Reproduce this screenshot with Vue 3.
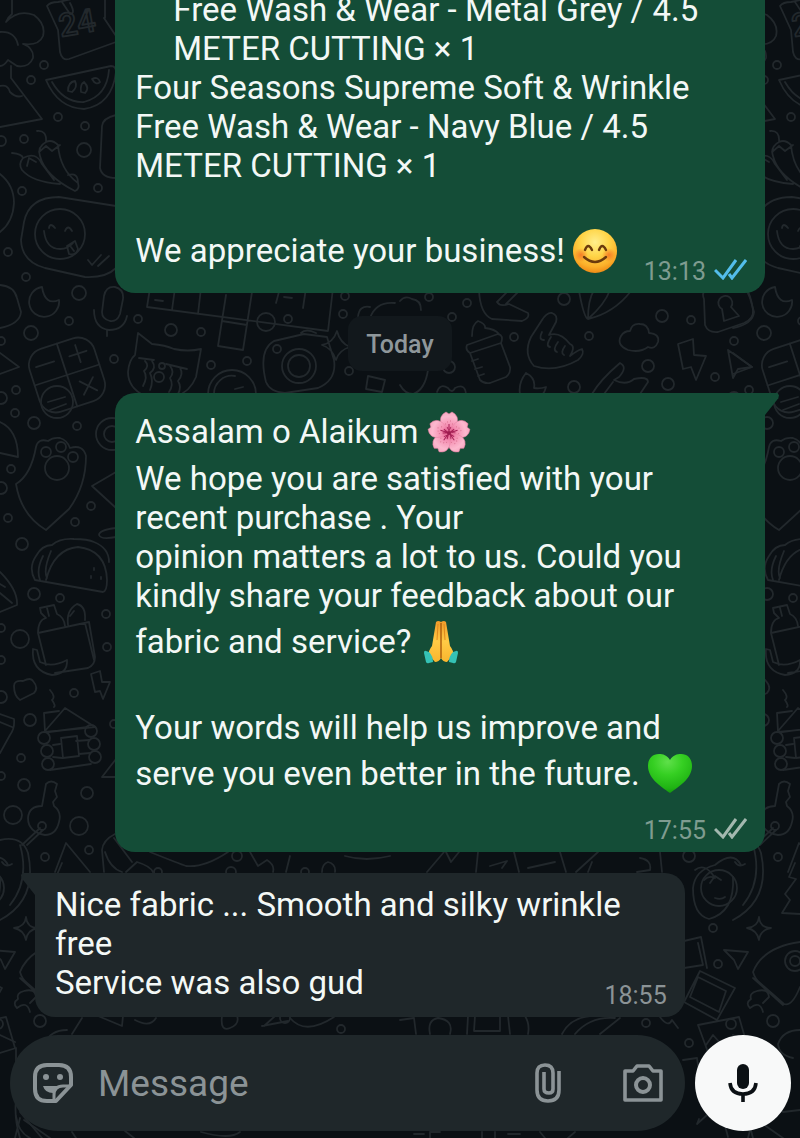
<template>
  <div class="chat">
    <!-- doodle wallpaper -->
    <svg class="wallpaper" width="1466" height="1138" viewBox="0 0 1466 1138" aria-hidden="true">
      <defs>
        <g id="doodle-edge">
          <circle v-for="(d, i) in edgeDots" :key="i" :cx="d[0]" :cy="d[1]" :r="d[2]" />
          <!-- tree, calendar -->
          <path d="M12 0V14Q8 17 6 22Q18 9 34 15Q46 24 43 36Q39 46 23 44Q34 48 33 58Q29 68 17 66L8 60Q4 66 0 66M0 32Q15 31 18 45M11 66V78L42 119L0 127M0 86Q8 84 10 92Q16 98 22 96" />
          <path d="M47 6Q50 2 58 2L104 -8M47 6L58 30L60 52Q62 61 69 59L116 42M104 18L116 36M62 2L70 14Q76 14 70 3M105 0V18" />
          <text x="61" y="37" transform="rotate(-10 61 37)">24</text>
          <!-- watermelon -->
          <path d="M46 80L111 66Q116 66 116 72Q112 105 84 109Q58 108 46 80ZM52 82Q64 103 84 102Q107 96 109 70M68 91Q68 82 75 81Q78 87 72 92ZM81 92Q80 84 84 82Q90 88 85 93ZM92 79Q98 76 100 82Q96 86 92 79Z" />
          <!-- chili peppers -->
          <path d="M37 131Q47 130 46 142Q37 147 40 156Q45 176 75 191Q80 189 78 183Q60 170 58 145Q52 139 46 142M39 152L46 146L52 151L60 145M12 153Q22 154 23 158Q18 164 22 170Q32 182 60 184M23 158Q36 151 42 164L54 180M27 166L29 158L36 162M68 175Q78 172 78 183M116 115Q103 118 102 126L100 168Q102 178 116 178" />
          <!-- mug with a smile -->
          <path d="M116 206L59 197Q29 197 24 222L21 240Q22 262 45 268L85 277Q106 278 116 268M44 231Q46 249 60 249Q68 249 73 243M49 228Q50 222 55 228M65 231Q68 224 72 231M67 246L75 241L78 249Q76 256 69 254ZM71 247L74 251M88 260L92 265L101 255M98 266L109 256M0 174Q14 185 14 203Q13 222 0 232" />
          <circle cx="60" cy="234" r="25" />
          <!-- moon, microphone -->
          <path d="M0 285Q14 286 17 298L21 312Q20 324 0 328M42 287A15 15 0 1 0 59 300Q45 306 42 287ZM104 296Q106 286 115 287Q124 289 123 299L120 314Q117 322 110 321Q102 319 102 312ZM94 310Q94 328 109 330Q124 330 127 316M107 330V336" />
          <!-- calculator -->
          <g transform="translate(67 375) rotate(-18)">
            <rect x="-34" y="-33" width="68" height="66" rx="17" />
            <path d="M0 -33V33M-34 0H34M-27 -17H-8M8 -17H26M17 -26V-8M10 10L24 24M24 10L10 24" />
          </g>
          <circle cx="57" cy="402" r="16" />
          <path d="M48 402L65 397M50 410L66 404M0 353L19 367L0 374M0 422Q18 430 18 457L0 453" />
          <!-- paw heart -->
          <path d="M36 447Q38 438 48 441Q53 437 60 438Q67 440 70 448Q83 444 86 456Q86 486 69 509L46 530Q21 515 16 484Q31 475 36 447ZM116 472L92 486L116 508M116 528Q99 530 99 535Q101 540 116 537" />
          <circle cx="46" cy="452" r="5" /><circle cx="61" cy="447" r="5" /><circle cx="73" cy="457" r="5" />
          <circle cx="57" cy="468" r="12" /><circle cx="112" cy="434" r="16" /><circle cx="112" cy="434" r="8" />
          <!-- taco -->
          <path d="M46 580Q54 549 78 547Q106 550 107 580Q107 591 103 592L35 580Q28 568 36 556Q42 545 52 545Q60 538 74 539Q88 539 94 542Q109 548 109 562M43 556Q36 570 40 580M51 551Q43 570 47 578M94 568V570M91 576V578M101 577V579M0 572Q18 590 17 605L0 612M0 593L12 603M5 587L0 584" />
          <!-- groceries -->
          <path d="M38 633L89 622L95 657Q95 665 88 668L55 673M38 633L46 665M38 633Q38 620 46 618L41 613L40 608L54 605L57 614Q64 617 65 626M47 608L49 616M68 625Q66 610 77 604Q86 606 85 620M85 623L94 660M70 616L74 611M33 649Q31 671 52 675Q68 674 67 660Q52 668 40 662L37 650ZM91 674L100 671L102 682L110 682L103 699L100 691L95 692ZM14 686Q14 680 23 681Q31 677 33 681Q39 688 34 693L20 700Q14 696 14 686Z" />
          <!-- log cabin -->
          <path d="M50 690Q56 697 52 700Q56 706 54 707M45 731L65 708L95 727L45 732L44 713L59 711M49 732L88 727M53 745L60 744M76 741L89 740M53 757L62 758M79 754L90 753M50 770L91 764M61 738L77 736L79 756L63 758ZM116 759L102 777H116M0 714L14 719Q15 728 10 735L0 753M0 722L12 727" />
          <circle cx="44" cy="738" r="6" /><circle cx="47" cy="751" r="6" /><circle cx="48" cy="764" r="6" />
          <circle cx="91" cy="731" r="6" /><circle cx="94" cy="744" r="6" /><circle cx="95" cy="757" r="6" />
          <!-- key, sloth -->
          <path d="M42 806L46 784Q51 779 57 784L55 791L57 797L53 802L54 806Q62 812 59 822Q56 835 45 835Q28 832 28 818Q29 806 42 806ZM40 828L22 845M43 830L27 845M55 872L66 843L90 872M0 840Q22 835 28 853Q38 900 0 920M20 845Q30 880 10 905M2 862Q6 868 12 864" />
          <circle cx="42" cy="826" r="4" />
          <path d="M-38 870Q-28 862 -18 878Q-24 875 -29 880M0 877Q2 912 -24 919Q-40 915 -40 888Q-38 870 -18 865Q0 850 8 865" />
          <circle cx="-14" cy="888" r="18" />
          <path d="M-23 883L-18 876L-12 880M-18 898Q-12 900 -8 897M62 863L56 877L63 879L52 894L57 900L49 913L67 914" />
          <!-- stars, rocket -->
          <path d="M26 917Q27 928 38 928Q27 930 26 940Q24 930 14 928Q25 927 26 917ZM-9 950L15 952L5 969L1 960Z" />
          <path d="M67 942Q30 947 20 972Q22 979 27 983L51 1004Q59 1007 67 987M20 978L50 1005M24 991Q16 993 18 999Q12 1003 17 1008Q27 1000 30 1012M24 991Q35 988 36 997L30 1003" />
          <circle cx="62" cy="961" r="10" /><circle cx="62" cy="961" r="5" />
          <!-- photos -->
          <path d="M-49 941L-32 937L-26 968M-49 968L-30 965L-35 943M-33 971L2 988L-16 1020L-49 1002ZM-35 977L-7 991L-14 1012L-43 997ZM-35 1025L6 1017L15 1048M-35 1025L-24 1055M-27 1045L-20 1035L-12 1044M67 1030Q50 1030 45 1044Q46 1055 60 1058" />
          <path d="M-50 1060L-36 1058L-33 1080M-34 1119L-36 1124L-16 1106L-2 1112Q-10 1113 -10 1118L-5 1137M30 1115Q40 1105 50 1112L67 1110M15 1138L20 1118M0 1035L15 1042M0 1053L16 1048V1072M16 1100Q14 1118 20 1138M24 1120L50 1138" />
        </g>
      </defs>
      <g class="doodle">
        <use href="#doodle-edge" />
        <use href="#doodle-edge" x="733" />
        <circle v-for="(d, i) in middleDots" :key="i" :cx="d[0]" :cy="d[1]" :r="d[2]" />
        <!-- crossword -->
        <path d="M150 288L147 307L328 331L333 288M175 288L172 310M201 288L198 314M226 295L218 346L243 350L252 292M222 321L247 325M280 288L276 303M306 288L303 308M155 300L163 301M284 297L292 298" />
        <!-- cat -->
        <path d="M138 333L152 344Q165 345 174 349Q188 352 201 349L196 377Q190 392 176 396H145Q128 388 128 372Q129 360 135 355ZM139 358L154 360M166 364L187 369M145 361Q150 366 144 371Q148 377 143 386M152 361Q157 368 150 373Q154 381 150 390M170 366Q175 372 170 378Q174 385 169 392M180 368Q184 374 178 381Q182 387 178 394" />
        <circle cx="162" cy="366" r="3" /><circle cx="159" cy="377" r="5" />
        <!-- camera, globe -->
        <path d="M301 333Q306 328 316 333M274 341L304 334L327 337L334 360Q337 380 318 388L285 393Q270 392 266 382Q258 350 274 341ZM337 331Q340 343 350 347Q339 350 336 360Q332 348 322 345Q333 343 337 331ZM208 394A24 24 0 0 1 256 394M214 394A18 18 0 0 1 235 376M235 389L243 387" />
        <circle cx="299" cy="366" r="17" /><circle cx="299" cy="366" r="11" />
        <path d="M368 376L385 380L382 392L366 389ZM358 317Q359 305 370 307M370 318Q376 301 395 303M400 301Q405 295 412 299Q421 300 421 310" />
        <!-- bottle, hands -->
        <path d="M467 345L498 334Q504 335 501 343L470 353Q465 350 467 345ZM472 336Q472 324 478 321Q486 324 485 328Q495 329 499 334M470 353L480 380Q484 384 490 383L506 377Q511 373 510 367L501 343M472 361L478 359M475 369L482 367M478 376L484 374" />
        <path d="M479 290Q480 314 492 319L522 321Q530 318 528 313L509 304Q500 307 497 302M497 302L511 288M506 304L520 290M579 291Q584 318 588 319Q614 313 631 291M588 319Q588 300 594 290M588 319Q605 304 610 290" />
        <path d="M552 313Q558 315 556 322L549 335Q560 331 570 344Q576 346 570 356Q578 350 582 349Q585 354 578 360Q555 373 534 366Q523 354 531 337L542 320Q547 312 552 313ZM542 332Q538 340 544 340M551 337Q545 346 550 347M558 342Q552 350 557 352M565 346Q560 353 564 355" />
        <path d="M526 373Q536 378 534 388Q540 389 546 387Q544 394 542 394M526 373Q518 383 520 394M592 394Q600 380 620 363Q628 367 619 377L614 380Q626 386 634 379Q648 376 648 382L640 394M613 382L604 394M437 392Q440 383 448 388Q452 394 455 388Q465 383 466 394M400 385Q405 394 413 394Q425 390 428 370" />
        <!-- cloud, lock, bolt, cursor -->
        <path d="M628 350Q616 345 621 336Q624 331 630 331Q632 323 640 324Q648 324 649 333Q660 334 658 342Q655 350 648 347Q640 353 628 350ZM704 299Q700 289 712 291L744 288Q750 290 753 310Q754 319 744 323L718 332Q708 333 705 325ZM722 309A7 7 0 1 1 731 307L739 316L724 321ZM678 344L693 339L694 355L706 356L696 380L691 367L683 369ZM728 350L752 367L738 369L733 378Z" />
        <!-- strip between the lower bubbles -->
        <path d="M104 872L102 850Q103 840 115 834M105 852Q110 868 122 872M126 872L137 862Q150 866 153 872M114 838L132 862M150 852Q180 864 186 866Q204 868 228 852M250 852L258 866L267 860Q275 865 273 872M290 856L286 872M322 872Q322 864 328 862Q336 864 335 872M345 856Q366 862 390 856" />
        <path d="M427 872L444 852M446 852L451 862L459 852M478 852L476 872M490 866L507 861L502 868M514 852L519 872M528 868L555 862M560 852L566 872M576 872L598 852M592 862L588 872M640 858Q652 860 650 870L637 872M660 852L662 872" />
        <!-- strip above the composer -->
        <path d="M72 1034L82 1018M98 1016L122 1026L123 1016M135 1020Q150 1028 156 1018M222 1016Q220 1032 230 1028Q240 1024 237 1016M264 1026L275 1016M262 1026L288 1021M290 1018Q305 1036 334 1017M400 1020L414 1018L416 1034M430 1034Q427 1020 438 1018Q454 1020 450 1034M468 1016L467 1034M475 1016L474 1031H500V1016M508 1016L510 1034M525 1016Q530 1024 528 1034M562 1034Q570 1018 590 1016M575 1034Q590 1016 615 1018M600 1034L620 1018M660 1017Q668 1028 672 1020L678 1028" />
        <!-- strip under the composer -->
        <path d="M16 1116Q18 1132 30 1138M20 1112L42 1138M72 1132L76 1138M125 1131L134 1138M201 1132Q230 1140 240 1132M414 1134H424M430 1138V1132H440M482 1132V1138M495 1132V1138M508 1134H520M540 1132L545 1138M575 1132L568 1138" />
      </g>
    </svg>

    <main class="messages">
      <article class="bubble out first">
        <div class="text">
          <ul class="items">
            <li>Free Wash &amp; Wear - Metal Grey / 4.5<br>METER CUTTING × 1</li>
          </ul>
          Four Seasons Supreme Soft &amp; Wrinkle<br>
          Free Wash &amp; Wear - Navy Blue / 4.5<br>
          METER CUTTING × 1<br>
          <br>
          We appreciate your business!
          <svg class="emoji" viewBox="0 0 44 44" role="img" aria-label="smiling face">
            <defs>
              <radialGradient id="face" cx=".5" cy=".3" r=".7">
                <stop offset="0" stop-color="#ffee8c" />
                <stop offset=".45" stop-color="#ffd548" />
                <stop offset=".8" stop-color="#fcb02a" />
                <stop offset="1" stop-color="#ef8a16" />
              </radialGradient>
              <radialGradient id="cheek">
                <stop offset="0" stop-color="#f4661f" stop-opacity=".75" />
                <stop offset="1" stop-color="#f4661f" stop-opacity="0" />
              </radialGradient>
            </defs>
            <circle cx="22" cy="22" r="22" fill="url(#face)" />
            <circle cx="8" cy="26" r="7" fill="url(#cheek)" />
            <circle cx="36" cy="26" r="7" fill="url(#cheek)" />
            <g fill="none" stroke="#6b3a0c" stroke-width="2.4" stroke-linecap="round">
              <path d="M12 21Q15 13 19 21M26 21Q29 13 33 21" />
              <path d="M11 28Q22 38 33 28" />
            </g>
          </svg>
        </div>
        <footer class="meta">
          <time>13:13</time>
          <svg class="ticks read" viewBox="0 0 33 22" aria-label="Read"><path d="M1 12L9 20L22 2M15 16L18 20L32 2" /></svg>
        </footer>
      </article>

      <div class="day">Today</div>

      <article class="bubble out tail long">
        <div class="text">
          Assalam o Alaikum
          <svg class="emoji" viewBox="0 0 44 44" role="img" aria-label="cherry blossom">
            <defs>
              <radialGradient id="petal" gradientUnits="userSpaceOnUse" cx="22" cy="23" r="22">
                <stop offset="0" stop-color="#d9487c" />
                <stop offset=".35" stop-color="#f48fb2" />
                <stop offset=".75" stop-color="#fcb8ce" />
                <stop offset="1" stop-color="#f8a5c0" />
              </radialGradient>
            </defs>
            <g v-for="n in 5" :key="n" :transform="`rotate(${(n - 1) * 72} 22 23)`">
              <path d="M22 23C17 19 12 13 14 7Q15 4 19 2L22 4L25 2Q29 4 30 7C32 13 27 19 22 23Z" fill="url(#petal)" stroke="#e983a6" stroke-width=".6" />
              <path d="M22 22V14M22 22L20 17M22 22L24 17" stroke="#a51f55" stroke-width="1" />
              <path d="M20 12H21M23 11H24M18 14H19M25 14H26" stroke="#d9738f" stroke-width="1" />
            </g>
            <circle cx="22" cy="23" r="2" fill="#9c1c4f" />
          </svg><br>
          We hope you are satisfied with your<br>
          recent purchase . Your<br>
          opinion matters a lot to us. Could you<br>
          kindly share your feedback about our<br>
          fabric and service?
          <svg class="emoji" viewBox="0 0 44 44" role="img" aria-label="folded hands">
            <defs>
              <linearGradient id="hand" x1="0" y1="0" x2="0" y2="1">
                <stop offset="0" stop-color="#f09a2a" />
                <stop offset=".5" stop-color="#ffcb45" />
                <stop offset="1" stop-color="#f9b52e" />
              </linearGradient>
            </defs>
            <path d="M17 2Q19 0 22 2Q25 0 27 2L29 14L31 26Q35 31 34 35L28 42Q24 42 22 38Q20 42 16 42L10 35Q9 31 13 26L15 14Z" fill="url(#hand)" />
            <path d="M22 3V38" fill="none" stroke="#a85a0c" stroke-width="1.4" />
            <path d="M19 4L18 20M25 4L26 20" fill="none" stroke="#de8a1c" stroke-width="1" />
            <path d="M7 31Q5 30 5 33L7 42Q8 44 10 43L14 42Q14 36 10 32ZM37 31Q39 30 39 33L37 42Q36 44 34 43L30 42Q30 36 34 32Z" fill="#35c2b5" />
          </svg><br>
          <br>
          Your words will help us improve and<br>
          serve you even better in the future.
          <svg class="emoji" viewBox="0 0 44 44" role="img" aria-label="green heart">
            <defs>
              <radialGradient id="heart" cx=".45" cy=".2" r=".85">
                <stop offset="0" stop-color="#5fe04a" />
                <stop offset=".4" stop-color="#35cf22" />
                <stop offset=".8" stop-color="#1fb313" />
                <stop offset="1" stop-color="#138a0e" />
              </radialGradient>
            </defs>
            <path d="M22 8C25 3 29 2 33 2C40 2 44 7 44 14C44 26 32 34 22 41C12 34 0 26 0 14C0 7 4 2 11 2C15 2 19 3 22 8Z" fill="url(#heart)" />
          </svg>
        </div>
        <footer class="meta">
          <time>17:55</time>
          <svg class="ticks" viewBox="0 0 33 22" aria-label="Delivered"><path d="M1 12L9 20L22 2M15 16L18 20L32 2" /></svg>
        </footer>
      </article>

      <article class="bubble in tail">
        <div class="text">
          Nice fabric ... Smooth and silky wrinkle<br>
          free<br>
          Service was also gud
        </div>
        <footer class="meta">
          <time>18:55</time>
        </footer>
      </article>
    </main>

    <form class="composer" @submit.prevent="send">
      <div class="field">
        <button type="button" class="icon" aria-label="Stickers">
          <svg width="42" height="42" viewBox="0 0 42 42">
            <g fill="none" stroke="currentColor" stroke-width="4" stroke-linejoin="round">
              <path d="M15 3H27Q39 3 39 15V23L24 39H15Q3 39 3 27V15Q3 3 15 3Z" />
              <path d="M22 39V33Q22 24 31 24H39" stroke-width="3" />
            </g>
            <circle cx="14" cy="15" r="3" fill="currentColor" />
            <circle cx="28" cy="15" r="3" fill="currentColor" />
            <path d="M11 24H26Q22 27 21 31Q13 31 11 24Z" fill="currentColor" />
          </svg>
        </button>
        <input v-model="draft" type="text" placeholder="Message" aria-label="Message">
        <button type="button" class="icon attach" aria-label="Attach">
          <svg width="28" height="42" viewBox="0 0 28 42">
            <path d="M25 9V28Q25 39 14 39Q3 39 3 28V11Q3 3 11 3Q19 3 19 11V27Q19 31 15 31Q10 31 10 27V10" fill="none" stroke="currentColor" stroke-width="3.6" />
          </svg>
        </button>
        <button type="button" class="icon" aria-label="Camera">
          <svg width="42" height="42" viewBox="0 0 42 42">
            <g fill="none" stroke="currentColor" stroke-width="3.6" stroke-linejoin="round">
              <path d="M3 9H11L15 4H27L31 9H39V38H3Z" />
              <circle cx="21" cy="23" r="7" stroke-width="4" />
            </g>
          </svg>
        </button>
      </div>
      <button type="submit" class="mic" aria-label="Record voice message">
        <svg width="30" height="40" viewBox="0 0 30 40">
          <rect x="9" y="1" width="12" height="25" rx="6" fill="currentColor" />
          <path d="M2 20Q3 31 15 31Q27 31 28 20M15 31V39" fill="none" stroke="currentColor" stroke-width="3.6" />
        </svg>
      </button>
    </form>
  </div>
</template>

<script setup>
import { ref } from 'vue';

const draft = ref('');

// x, y, radius
const edgeDots = [
  [44, 65, 4], [31, 80, 4], [58, 117, 4], [85, 126, 4], [24, 139, 4], [1, 141, 5],
  [84, 150, 7], [22, 191, 4], [98, 188, 4], [8, 252, 4], [26, 277, 4], [79, 293, 7],
  [69, 321, 4], [31, 333, 7], [1, 341, 4], [16, 390, 4], [1, 398, 6], [15, 413, 4],
  [34, 423, 6], [77, 426, 4], [114, 359, 4], [11, 469, 4], [1, 488, 6], [91, 506, 4],
  [8, 518, 4], [75, 522, 4], [22, 544, 6], [34, 594, 6], [60, 598, 4], [106, 614, 4],
  [20, 639, 9], [107, 647, 4], [1, 628, 4], [1, 660, 4], [74, 693, 4], [1, 697, 6],
  [30, 720, 6], [114, 724, 4], [21, 758, 4], [1, 776, 4], [24, 785, 6], [87, 793, 6],
  [13, 815, 9], [79, 826, 9], [89, 850, 4], [45, 857, 4], [-20, 928, 4], [-15, 964, 4],
  [40, 1021, 6], [-44, 1043, 4], [-2, 1024, 5]
];

const middleDots = [
  [138, 319, 4], [171, 330, 6], [201, 332, 4], [211, 365, 4], [247, 361, 4], [266, 322, 9],
  [288, 319, 4], [277, 349, 4], [343, 314, 4], [345, 296, 4], [349, 371, 4], [429, 297, 4],
  [467, 303, 4], [452, 317, 4], [449, 367, 6], [514, 337, 4], [589, 336, 4], [564, 299, 6],
  [574, 387, 6], [648, 366, 6], [662, 316, 6], [691, 320, 4], [668, 384, 6], [715, 377, 4],
  [237, 856, 5], [231, 872, 5], [158, 872, 4], [305, 872, 4],
  [689, 856, 6], [341, 1029, 4], [646, 1023, 4], [285, 1018, 5]
];

function send() {
  draft.value = '';
}
</script>

<style>
body {
  background: #0b1014;
}
</style>

<style scoped>
.chat {
  position: relative;
  height: 100vh;
  display: flex;
  flex-direction: column;
  overflow: hidden;
  background: #0b1014;
  font-family: Roboto, sans-serif;
  color: #f3f8f6;
}

.wallpaper {
  position: absolute;
  top: 0;
  left: 0;
}

.doodle {
  fill: none;
  stroke: #22282c;
  stroke-width: 1.8;
  stroke-linejoin: round;
  stroke-linecap: round;
}

#doodle-edge text {
  font-size: 32px;
  font-weight: 500;
}

/* messages */
.messages {
  position: relative;
  flex: 1;
  min-height: 0;
  display: flex;
  flex-direction: column;
  justify-content: flex-end;
  padding: 0 35px 18px;
}

.bubble {
  position: relative;
  flex: none;
  width: 89%;
  box-sizing: border-box;
  display: grid;
  padding: 12px 18px 7px 20px;
  border-radius: 20px;
  font-size: 33px;
  line-height: 39px;
}

.out {
  align-self: flex-end;
  background: #144d37;
}

.in {
  align-self: flex-start;
  margin-top: 21px;
  background: #1f272a;
}

.first {
  padding-top: 40px;
}

.tail::before {
  content: '';
  position: absolute;
  top: 0;
  width: 14px;
  height: 22px;
  background: inherit;
}

.out.tail {
  border-top-right-radius: 0;
}

.out.tail::before {
  left: 100%;
  clip-path: polygon(0 0, 90% 0, 100% 10%, 95% 24%, 0 100%);
}

.in.tail {
  border-top-left-radius: 0;
}

.in.tail::before {
  right: 100%;
  clip-path: polygon(100% 0, 10% 0, 0 10%, 5% 24%, 100% 100%);
}

/* the text and the time share one cell */
.text,
.meta {
  grid-area: 1 / 1;
}

.text {
  margin-bottom: 8px;
}

.long .text {
  margin-bottom: 44px;
}

.items {
  margin: 0;
  padding: 0 0 0 38px;
  list-style: none;
}

.emoji {
  width: 44px;
  height: 44px;
  margin: 5px 0;
  vertical-align: -16px;
}

.meta {
  place-self: end;
  display: flex;
  align-items: flex-start;
  gap: 8px;
  font-size: 25px;
  line-height: 28px;
  color: #7f9c90;
}

.in .meta {
  color: #8b9396;
}

.ticks {
  width: 33px;
  height: 22px;
  fill: none;
  stroke: #a3b8af;
  stroke-width: 3;
}

.ticks.read {
  stroke: #53bdeb;
}

.day {
  align-self: center;
  flex: none;
  margin: 23px 0 22px;
  padding: 3px 18px 0;
  border-radius: 14px;
  background: #12181c;
  color: #8f979b;
  font-size: 25px;
  font-weight: 500;
  line-height: 52px;
}

/* composer */
.composer {
  position: relative;
  flex: none;
  display: flex;
  gap: 10px;
  padding: 0 9px 7px 10px;
}

.field {
  flex: 1;
  min-width: 0;
  height: 96px;
  box-sizing: border-box;
  display: flex;
  align-items: center;
  padding: 0 21px 0 22px;
  border-radius: 48px;
  background: #1f272a;
}

.field input {
  flex: 1;
  min-width: 0;
  margin: 0 24px;
  padding: 2px 0 0;
  border: 0;
  outline: 0;
  background: none;
  font-family: inherit;
  font-size: 37px;
  line-height: 44px;
  color: #f3f8f6;
}

.field input::placeholder {
  color: #8b9396;
  opacity: 1;
}

.icon {
  display: flex;
  padding: 0;
  border: 0;
  background: none;
  color: #8b9396;
  cursor: pointer;
}

.attach {
  margin-right: 60px;
}

.mic {
  flex: none;
  display: flex;
  align-items: center;
  justify-content: center;
  width: 96px;
  height: 96px;
  padding: 0;
  border: 0;
  border-radius: 50%;
  background: #f8f9f9;
  color: #0b1014;
  cursor: pointer;
}
</style>
